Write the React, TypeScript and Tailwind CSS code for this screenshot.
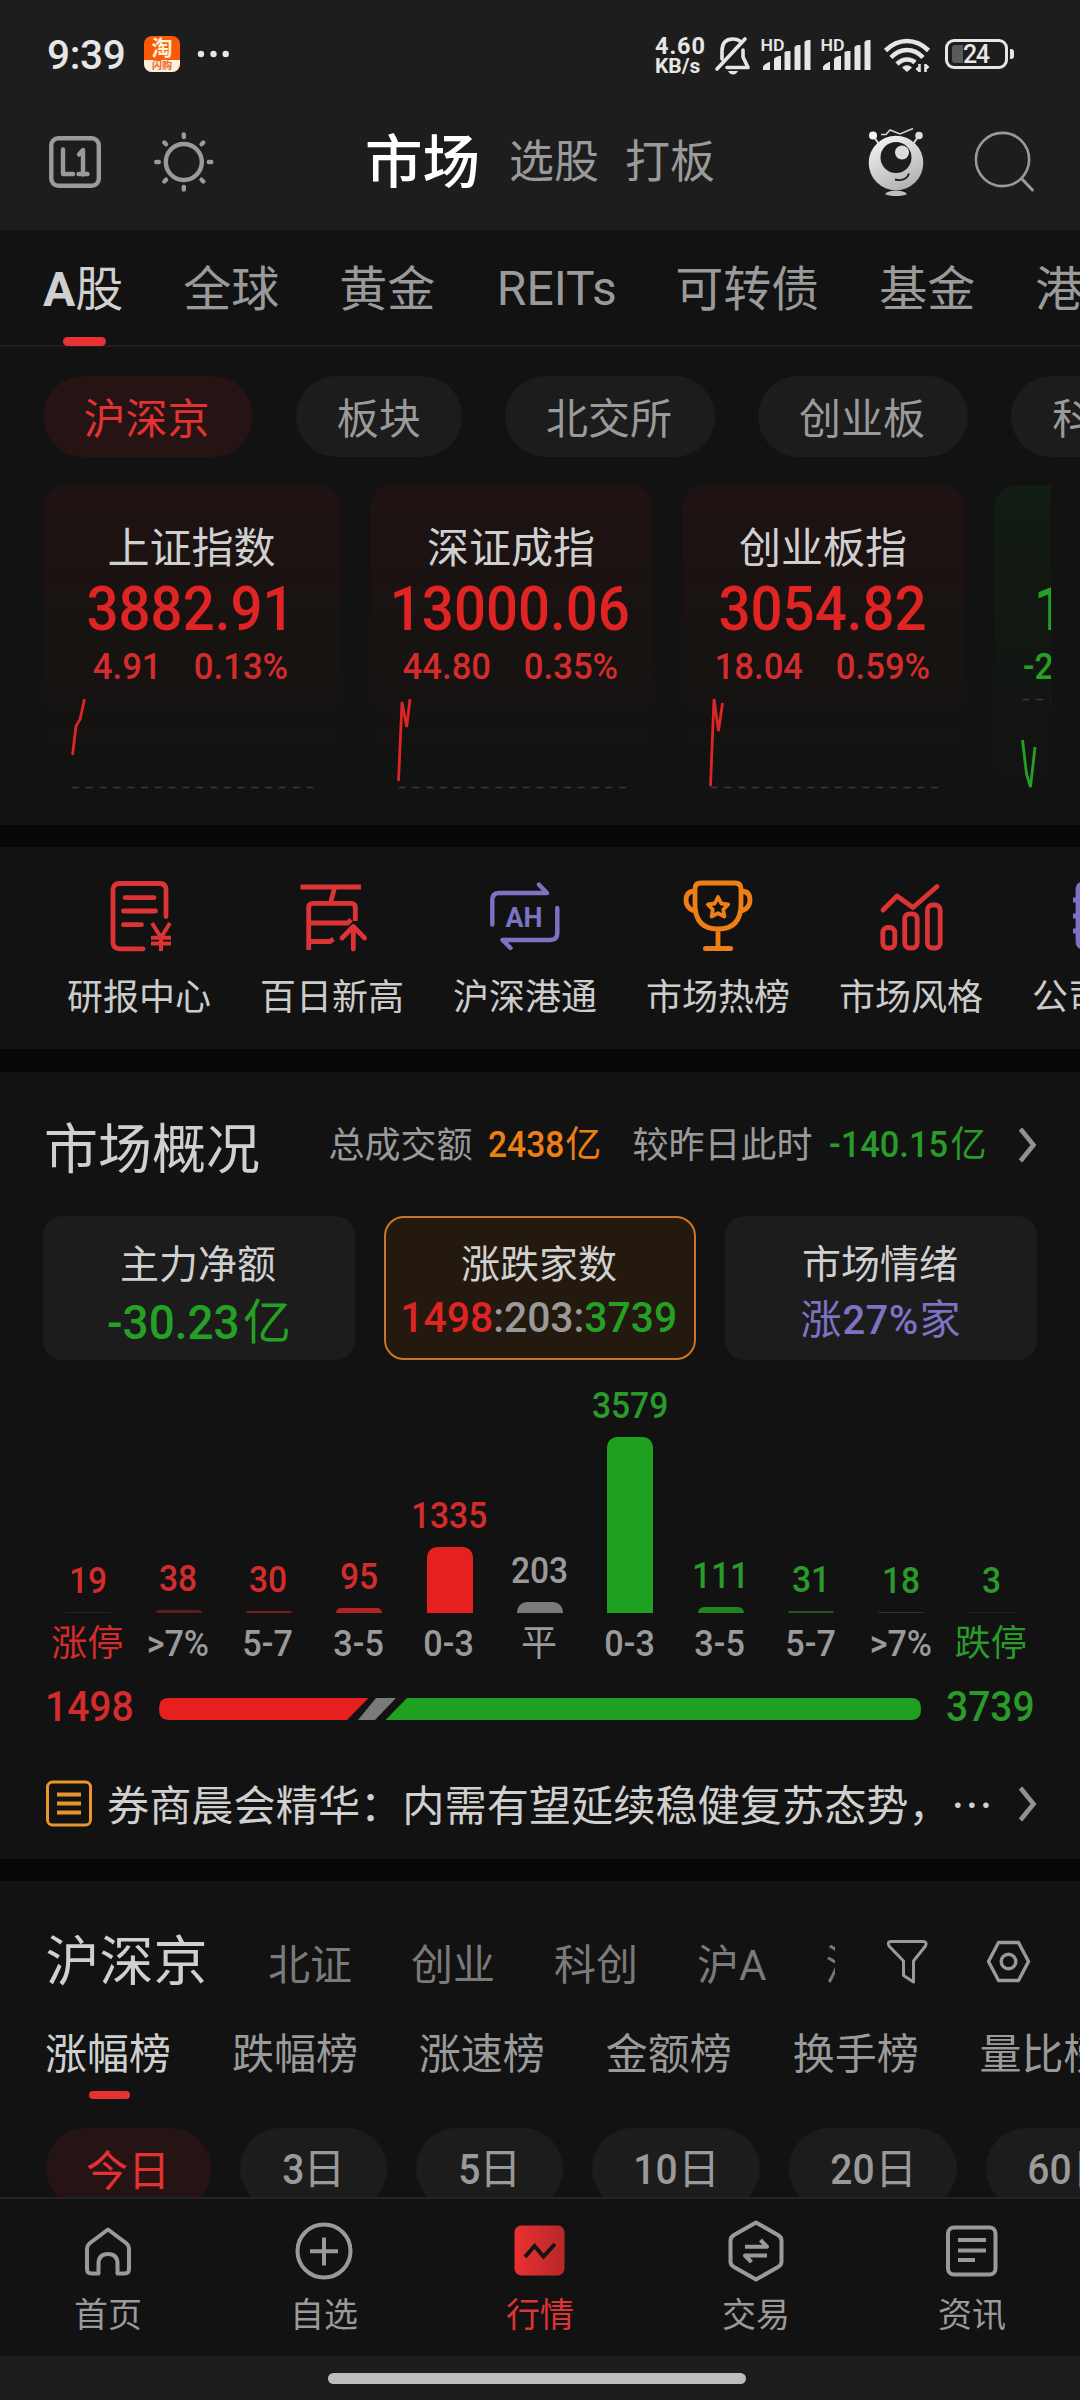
import React from "react";

const FONT = "font-['Roboto','Noto_Sans_CJK_SC',sans-serif]";
const NUM = "font-medium inline-block scale-x-[0.907]";
const NUM_WIDE = "font-medium inline-block scale-x-[0.925]";

/* ---------- status bar ---------- */

function Signal() {
  return (
    <svg className="h-[36px] w-[52px]" viewBox="760 36 52 36" fill="#e6e6e6">
      <text x="760.5" y="50.500" fontSize="17" fontWeight="600" textLength="24" lengthAdjust="spacingAndGlyphs">HD</text>
      <path d="M763 70v-3q0-2 6-5h1v8zM774 70V59q1-2 5-3h2v14zM784.500 70V52q1-1 4-1h2v19zM794.500 70V47q1-2 4-2h2v25zM804.500 70V42q1-2 4-2h2v30z" />
    </svg>
  );
}

function StatusBar() {
  return (
    <div className="flex h-[96px] shrink-0 items-start pt-[36px] text-[#e6e6e6]">
      <div className="ml-[47px] flex h-[38px] w-[80px] items-center text-[40.500px] font-medium leading-none tracking-[-0.300px]">9:39</div>
      <div className="ml-[17px] flex h-[36px] w-[36px] flex-col items-center rounded-[8px] bg-[#fb5a08]">
        <span className="h-[24px] text-[21px] font-bold leading-[25px] text-[#fff3dc]">淘</span>
        <span className="flex h-[12px] w-full items-center justify-center rounded-b-[8px] bg-[#fdeedd] text-[10px] font-bold leading-[12px] text-[#e8651c]">闪购</span>
      </div>
      <svg className="ml-[15px] h-[36px] w-[38px]" viewBox="195 36 38 36" fill="#e6e6e6">
        <circle cx="201" cy="54" r="3.200" /><circle cx="213.500" cy="54" r="3.200" /><circle cx="225.700" cy="54" r="3.200" />
      </svg>
      <div className="ml-[422px] flex w-[51px] flex-col items-start pt-[1px] font-bold leading-[19px]">
        <span className="text-[23.500px] tracking-[0.900px]">4.60</span>
        <span className="text-[21px] leading-[20px]">KB/s</span>
      </div>
      <svg className="ml-[7px] h-[40px] w-[38px]" viewBox="713 35 38 40" fill="none" stroke="#e6e6e6" strokeWidth="3.600" strokeLinecap="round">
        <path d="M717 68L745 38" />
        <path d="M722 58V50q0-12 11-12q4 0 7 2" />
        <path d="M743 49v7l5 10.500H727" strokeLinejoin="round" />
        <path d="M728 70h10q-2 3.500-5 3.500t-5-3.500z" fill="#e6e6e6" stroke="none" />
      </svg>
      <div className="ml-[9px]"><Signal /></div>
      <div className="ml-[8px]"><Signal /></div>
      <svg className="ml-[9px] h-[38px] w-[52px]" viewBox="881 36 52 38" fill="none" stroke="#e6e6e6" strokeWidth="4.600">
        <path d="M885.500 50.500q9.500-9.500 21.500-9.500t21.500 9.500" />
        <path d="M891 57.500q7-7.500 16-7.500t16 7.500" />
        <path d="M897 64q4.500-4.500 10-4.500q5 0 8 3" />
        <path d="M902 67.500q5-4.500 10 0l-5 4.500z" fill="#e6e6e6" stroke="none" />
        <path d="M919.500 64v8m-3-4l3 3M925.500 72v-8m3 4l-3-3" strokeWidth="2.600" />
      </svg>
      <div className="ml-[12px] mt-[3px] flex h-[30px] w-[63px] items-center rounded-[9px] border-[3px] border-[#e6e6e6] pl-[4px]">
        <div className="h-[18px] w-[11px] rounded-l-[3px] bg-[#5a5a5a]" />
        <span className="text-[25px] font-medium leading-none tracking-[-1.500px]">24</span>
      </div>
      <div className="ml-[2px] mt-[13px] h-[10px] w-[4px] rounded-r-[3px] bg-[#e6e6e6]" />
    </div>
  );
}

/* ---------- title bar ---------- */

function Header() {
  return (
    <div className="flex h-[134px] shrink-0 items-start pt-[26px]">
      <svg className="ml-[45px] h-[80px] w-[60px] shrink-0" viewBox="45 122 60 80" fill="none" stroke="#9a9a9a" strokeWidth="4.400" strokeLinecap="round" strokeLinejoin="round">
        <rect x="51.300" y="138.300" width="47.500" height="47.500" rx="7" />
        <path d="M63 149.500v24.500h10M79 154.500l4-4.500v24.500M78.500 174h9" />
      </svg>
      <svg className="ml-[44px] h-[80px] w-[70px] shrink-0" viewBox="149 122 70 80" fill="none" stroke="#9a9a9a" strokeWidth="4.400" strokeLinecap="round">
        <circle cx="183.800" cy="162" r="18" />
        <path d="M183.800 134.500v2.500M183.800 187v2.500M156.300 162h2.500M208.800 162h2.500M164.300 142.500l1.800 1.800M201.500 179.700l1.800 1.800M203.300 142.500l-1.800 1.800M166.100 179.700l-1.800 1.800" />
      </svg>
      <div className="ml-[146px] flex h-[80px] items-center whitespace-nowrap pt-[1px] leading-none">
        <span className="w-[114px] pt-[2px] text-[57.500px] font-medium text-white">市场</span>
        <span className="ml-[30px] w-[90px] text-[45px] text-[#9a9a9a]">选股</span>
        <span className="ml-[26px] w-[90px] text-[45px] text-[#9a9a9a]">打板</span>
      </div>
      <svg className="ml-[148px] h-[80px] w-[66px] shrink-0" viewBox="863 122 66 80">
        <defs>
          <linearGradient id="bot" x1="0.200" y1="0" x2="0.700" y2="1">
            <stop offset="0" stopColor="#f4f4f4" />
            <stop offset="1" stopColor="#b0b0b0" />
          </linearGradient>
        </defs>
        <path d="M874 137l5 7M918 137l-5 7" stroke="#dcdcdc" strokeWidth="2" />
        <circle cx="873" cy="135.500" r="4" fill="#f4f4f4" />
        <circle cx="919" cy="135.500" r="3.800" fill="#dcdcdc" />
        <path d="M881 134.500h5l4-4.500l10 4l13-5.500" fill="none" stroke="#d5d5d5" strokeWidth="1.500" />
        <circle cx="896" cy="163" r="27.300" fill="url(#bot)" />
        <circle cx="896" cy="157.500" r="15.500" fill="#1d1d1d" />
        <circle cx="902" cy="152.500" r="7" fill="#dcdcdc" />
        <path d="M895 179.500q11 2.500 14-6" fill="none" stroke="#1d1d1d" strokeWidth="1.800" />
        <path d="M885 194q3-3.500 11-3.500t11 3.500q-4 2-11 2t-11-2z" fill="#c0c0c0" />
      </svg>
      <svg className="ml-[41px] h-[80px] w-[70px] shrink-0" viewBox="970 122 70 80" fill="none" stroke="#9a9a9a" strokeWidth="2.600" strokeLinecap="round">
        <circle cx="1002.500" cy="159.500" r="26.600" />
        <path d="M1021.500 178.500l11 11.500" strokeWidth="3" />
      </svg>
    </div>
  );
}

function MarketTabs() {
  return (
    <div className="h-[117px] shrink-0 border-b-2 border-[#1e1e1e] pl-[43px]">
      <div className="flex h-[107px] items-center gap-[60px] whitespace-nowrap pt-[13px] text-[48px] leading-none text-[#9a9a9a]">
        <span className="shrink-0 text-[#d0d0d0]"><span className="font-bold">A</span>股</span>
        <span className="shrink-0">全球</span>
        <span className="shrink-0">黄金</span>
        <span className="w-[120px] shrink-0 pb-[3px] pl-[1.500px]">REITs</span>
        <span className="shrink-0">可转债</span>
        <span className="shrink-0">基金</span>
        <span className="shrink-0">港股</span>
      </div>
      <div className="ml-[20px] h-[9px] w-[43px] rounded-full bg-[#e63232]" />
    </div>
  );
}

function BoardPills() {
  const items = ["沪深京", "板块", "北交所", "创业板", "科创板"];
  return (
    <div className="mt-[29px] flex h-[81px] shrink-0 gap-[43.200px] pl-[42.500px]">
      {items.map((t, i) => (
        <div
          key={t}
          className={
            "flex h-[81px] shrink-0 items-center whitespace-nowrap rounded-full px-[41px] pt-[7px] text-[42px] leading-none " +
            (i === 0 ? "w-[210px] bg-[#261414] text-[#e23232]" : i === 1 ? "w-[166px] bg-[#1c1c1c] text-[#9a9a9a]" : "w-[210px] bg-[#1c1c1c] text-[#9a9a9a]")
          }
        >
          {t}
        </div>
      ))}
    </div>
  );
}

/* ---------- index cards ---------- */

type IndexItem = {
  name: string; value: string; diff: string; pct: string;
  w: string; vb: string; line: string; dash: string;
};

const INDEXES: IndexItem[] = [
  { name: "上证指数", value: "3882.91", diff: "4.91", pct: "0.13%", w: "w-[298px]", vb: "0 0 298 100", line: "M29.500 65L33 36L37 29.500L41.500 9", dash: "M29 97.500H270" },
  { name: "深证成指", value: "13000.06", diff: "44.80", pct: "0.35%", w: "w-[283px]", vb: "0 0 283 100", line: "M28.500 91L32 12L36.700 37L40 9", dash: "M28.500 97.500H256" },
  { name: "创业板指", value: "3054.82", diff: "18.04", pct: "0.59%", w: "w-[283px]", vb: "0 0 283 100", line: "M28.500 96L32 9L36.500 41L40.500 13", dash: "M28.500 97.500H256" },
];

function IndexCards() {
  return (
    <div className="ml-[43px] mt-[28px] flex h-[340px] w-[1008px] shrink-0 gap-[29px] overflow-hidden">
      {INDEXES.map((it) => (
        <div key={it.name} className={"flex h-[308px] shrink-0 flex-col items-center rounded-[22px] bg-gradient-to-b from-[#1f1212] via-[#171311] to-[#121212] " + it.w}>
          <span className="mr-[1px] mt-[43px] text-[42px] leading-[42px] text-[#d0d0d0]">{it.name}</span>
          <span className={"mr-[3px] mt-[9px] text-[61px] leading-[61px] text-[#e02424] " + NUM_WIDE}>{it.value}</span>
          <div className="mt-[8px] flex w-full justify-center gap-[25px] pr-[2px] text-[37.500px] leading-[37px] text-[#d42c2c]">
            <span className={NUM_WIDE}>{it.diff}</span>
            <span className={NUM_WIDE}>{it.pct}</span>
          </div>
          <svg className="mt-[5px] h-[100px] w-full shrink-0" viewBox={it.vb} fill="none">
            <path d={it.dash} stroke="#383838" strokeWidth="1.500" strokeDasharray="7 6.800" />
            <path d={it.line} stroke="#dc2626" strokeWidth="2.800" />
          </svg>
        </div>
      ))}
      <div className="flex h-[308px] w-[283px] shrink-0 flex-col items-start rounded-[22px] bg-gradient-to-b from-[#111c12] via-[#121712] to-[#121212]">
        <span className={"ml-[39.500px] mt-[94px] origin-left text-[61px] leading-[61px] text-[#24a124] " + NUM}>1</span>
        <span className={"ml-[29px] mt-[8px] origin-left text-[37px] leading-[37px] text-[#24a124] " + NUM}>-2</span>
        <svg className="mt-[5px] h-[100px] w-full shrink-0" viewBox="0 0 283 100" fill="none">
          <path d="M28.500 9.500H256" stroke="#383838" strokeWidth="1.500" strokeDasharray="7 6.800" />
          <path d="M28.500 50L32.500 84L36.500 97L41 57" stroke="#24a124" strokeWidth="2.800" />
        </svg>
      </div>
    </div>
  );
}

/* ---------- shortcuts ---------- */

function Shortcut({ label, color, children }: { label: string; color: string; children: React.ReactNode }) {
  return (
    <div className="flex w-[193px] shrink-0 flex-col items-center">
      <svg className="h-[80px] w-[80px]" viewBox="0 0 80 80" fill="none" stroke={color} strokeWidth="4.800" strokeLinejoin="round">
        {children}
      </svg>
      <span className="mt-[24px] w-[144px] whitespace-nowrap text-[36px] leading-[36px] text-[#cccccc]">{label}</span>
    </div>
  );
}

function Shortcuts() {
  return (
    <div className="flex h-[202px] shrink-0 bg-[#121212] pl-[42.500px] pt-[29px]">
      <Shortcut label="研报中心" color="#dc3434">
        <path d="M44 72.800H20.500q-6.500 0-6.500-6.500V14q0-6.500 6.500-6.500h40q6.500 0 6.500 6.500v26.500M26 21.700h29M24.500 35h32M24.500 48.700h18" strokeLinecap="round" />
        <path d="M53 47l9 14.500L71 47M62 61v14M52 61.700h20M52 67.500h20" strokeWidth="4" />
      </Shortcut>
      <Shortcut label="百日新高" color="#dc3434">
        <path d="M8.500 11h60.500M42.500 12l-4 15M16.700 74V31.500q0-4.200 4.200-4.200h38.200q4.200 0 4.200 4.200V45M17 47h39l3-3.500M17 65.500h21l3.500-2.500" />
        <path d="M61.300 73V51M50 62l11.300-11.500l11.300 11.500" strokeLinecap="round" />
      </Shortcut>
      <Shortcut label="沪深港通" color="#7d73c4">
        <path d="M7.300 48.500V24q0-7 7-7H62L54 8.700M72.300 32v25q0 7-7 7H17.500l8 8" strokeWidth="4.400" strokeLinecap="round" />
        <text x="20.500" y="51" fill="#7d73c4" stroke="none" fontSize="28" fontWeight="700" textLength="37" lengthAdjust="spacingAndGlyphs">AH</text>
      </Shortcut>
      <Shortcut label="市场热榜" color="#ee7f14">
        <path d="M17 13q0-6 6-6h34q6 0 6 6v15q0 25-23 25T17 28zM17 15q-9 0-9 9t11 12M63 15q9 0 9 9t-11 12M40 53v18" />
        <path d="M27.500 72.500h25" strokeWidth="5" strokeLinecap="round" />
        <path d="M40 21l3.200 6.500l7 1l-5 5l1.200 7L40 37.200l-6.400 3.300l1.200-7l-5-5l7-1z" strokeWidth="3.800" />
      </Shortcut>
      <Shortcut label="市场风格" color="#dc3434">
        <path d="M12 34L26 20L42 31.500L66 10.500" strokeLinecap="round" />
        <rect x="11.800" y="51.500" width="12" height="20.500" rx="5" />
        <rect x="33.700" y="37.800" width="12.500" height="34.200" rx="5" />
        <rect x="56.400" y="29" width="12.800" height="43" rx="5" />
      </Shortcut>
      <Shortcut label="公司日历" color="#7d73c4">
        <path d="M68 8H20q-6 0-6 6v51q0 6 6 6h48M9 24h10M9 40h10M9 55h10" />
      </Shortcut>
    </div>
  );
}

/* ---------- overview ---------- */

function Chevron() {
  return (
    <svg className="h-[38px] w-[20px] shrink-0" viewBox="0 0 20 38" fill="none" stroke="#929292" strokeWidth="4.600">
      <path d="M2.500 3L15.500 19L2.500 35" />
    </svg>
  );
}

const BARS = [
  { v: "19", l: "涨停", h: 1.4, c: "bg-[#3a1b1b]", t: "text-[#d42c2c]", lt: "text-[#d42c2c]" },
  { v: "38", l: ">7%", h: 2.6, c: "bg-[#5e1c1c]", t: "text-[#d42c2c]", lt: "text-[#9a9a9a]" },
  { v: "30", l: "5-7", h: 2, c: "bg-[#7a1e1e]", t: "text-[#d42c2c]", lt: "text-[#9a9a9a]" },
  { v: "95", l: "3-5", h: 5, c: "bg-[#b62222]", t: "text-[#d42c2c]", lt: "text-[#9a9a9a]" },
  { v: "1335", l: "0-3", h: 66, c: "bg-[#e61f1f]", t: "text-[#d42c2c]", lt: "text-[#9a9a9a]" },
  { v: "203", l: "平", h: 11, c: "bg-[#7a7a7a]", t: "text-[#9a9a9a]", lt: "text-[#9a9a9a]" },
  { v: "3579", l: "0-3", h: 176, c: "bg-[#20a020]", t: "text-[#2a9a2a]", lt: "text-[#9a9a9a]" },
  { v: "111", l: "3-5", h: 6, c: "bg-[#208520]", t: "text-[#2a9a2a]", lt: "text-[#9a9a9a]" },
  { v: "31", l: "5-7", h: 2, c: "bg-[#1e5c1e]", t: "text-[#2a9a2a]", lt: "text-[#9a9a9a]" },
  { v: "18", l: ">7%", h: 1.4, c: "bg-[#1a401a]", t: "text-[#2a9a2a]", lt: "text-[#9a9a9a]" },
  { v: "3", l: "跌停", h: 0.8, c: "bg-[#1a261a]", t: "text-[#2a9a2a]", lt: "text-[#2a9a2a]" },
];

function Overview() {
  const card = "flex h-[144px] w-[312px] shrink-0 flex-col items-center rounded-[20px] whitespace-nowrap";
  return (
    <div className="flex h-[787px] shrink-0 flex-col bg-[#121212]">
      <div className="flex h-[144px] shrink-0 items-start whitespace-nowrap pl-[44px] leading-none">
        <span className="mt-[52px] w-[216px] text-[54px] leading-[54px] text-[#d0d0d0]">市场概况</span>
        <div className="mt-[54px] flex h-[38px] items-center text-[36px] text-[#9a9a9a]">
          <span className="ml-[68.500px] w-[144px] pt-[1px]">总成交额</span>
          <span className="ml-[15.500px] w-[114px] pb-[1px] text-[#ee7f14]"><span className={"mr-[-7px] origin-left text-[37px] " + NUM}>2438</span>亿</span>
          <span className="ml-[30.500px] w-[180px] pt-[1px]">较昨日此时</span>
          <span className="ml-[16px] w-[161px] pb-[1px] text-[#2a9a2a]"><span className="mr-[-6px] inline-block origin-left scale-x-[0.93] text-[37px] font-medium">-140.15</span>亿</span>
          <span className="ml-[28.500px]"><Chevron /></span>
        </div>
      </div>

      <div className="flex gap-[29px] pl-[43px]">
        <div className={card + " bg-[#1c1c1c]"}>
          <span className="mr-[2px] mt-[30px] text-[39px] leading-[39px] text-[#d0d0d0]">主力净额</span>
          <span className="mt-[13px] text-[48px] leading-[50px] text-[#24a124]"><span className="mr-[-3px] inline-block origin-left scale-x-[0.955] text-[48px] font-medium">-30.23</span>亿</span>
        </div>
        <div className={card + " border-2 border-[#c9752a] bg-[#24190f]"}>
          <span className="mr-[2px] mt-[28px] text-[39px] leading-[39px] text-[#d0d0d0]">涨跌家数</span>
          <span className="mr-[2px] mt-[8px] inline-block scale-x-[0.95] text-[43px] font-medium leading-[48px] text-[#9a9a9a]">
            <span className="text-[#e02424]">1498</span>:203:<span className="text-[#24a124]">3739</span>
          </span>
        </div>
        <div className={card + " bg-[#1c1c1c]"}>
          <span className="mr-[2px] mt-[30px] text-[39px] leading-[39px] text-[#d0d0d0]">市场情绪</span>
          <span className="mr-[1px] mt-[11px] text-[41px] leading-[48px] text-[#7d73c4]">涨<span className="mx-[1px] text-[40px] font-medium tracking-[0.300px]">27%</span>家</span>
        </div>
      </div>

      <div className="mt-[20px] grid h-[233px] shrink-0 grid-cols-11 pl-[43px] pr-[43px]">
        {BARS.map((b, i) => (
          <div key={i} className="flex h-[233px] flex-col items-center justify-end">
            <span className={"mb-[13px] mr-[1px] text-[37px] leading-[37px] " + NUM + " " + b.t}>{b.v}</span>
            <div className={"w-[46px] shrink-0 rounded-t-[10px] " + b.c} style={{ height: b.h }} />
          </div>
        ))}
      </div>
      <div className="mt-[13px] grid h-[37px] shrink-0 grid-cols-11 whitespace-nowrap pl-[42px] pr-[44px] text-[36px] leading-[37px]">
        {BARS.map((b, i) => (
          <span key={i} className={"flex justify-center " + b.lt}>
            <span className={/[0-9]/.test(b.l) ? "inline-block scale-x-[0.95] font-medium" : ""}>{b.l}</span>
          </span>
        ))}
      </div>

      <div className="mt-[24px] flex h-[43px] shrink-0 items-center text-[43px] leading-[43px]">
        <span className={"ml-[45px] w-[88px] origin-left pb-[4px] text-[#d42c2c] " + NUM}>1498</span>
        <svg className="ml-[26px] h-[22px] w-[762px] shrink-0" viewBox="0 0 762 22">
          <path d="M9 0H209.500L188 22H9Q0 22 0 11T9 0z" fill="#e61f1f" />
          <path d="M217 0H237L216 22H199z" fill="#7a7a7a" />
          <path d="M248 0H753Q762 0 762 11T753 22H226.500z" fill="#20a020" />
        </svg>
        <span className={"ml-[25px] origin-left pb-[4px] text-[#2a9a2a] " + NUM}>3739</span>
      </div>

      <div className="mt-[53px] flex h-[44px] shrink-0 items-center whitespace-nowrap text-[42.200px] leading-[44px] text-[#d0d0d0]">
        <svg className="ml-[45px] mt-[-3px] h-[50px] w-[48px] shrink-0" viewBox="0 0 48 50" fill="none" stroke="#e8962c" strokeWidth="3">
          <rect x="2.500" y="3" width="43" height="43" rx="5" />
          <path d="M12 15.500h24M12 24.500h24M12 33.500h24" strokeWidth="3.800" />
        </svg>
        <span className="ml-[14px] w-[887px]">券商晨会精华：内需有望延续稳健复苏态势，<span className="font-['Noto_Sans_CJK_SC',sans-serif]">⋯</span></span>
        <span className="ml-[24px] mt-[-3px]"><Chevron /></span>
      </div>
    </div>
  );
}

/* ---------- ranking ---------- */

function Ranking() {
  const ranks = ["涨幅榜", "跌幅榜", "涨速榜", "金额榜", "换手榜", "量比榜"];
  const days: [string, string, string][] = [
    ["", "今日", "w-[165px]"], ["3", "日", "w-[147px]"], ["5", "日", "w-[147px]"],
    ["10", "日", "w-[168px]"], ["20", "日", "w-[168px]"], ["60", "日", "w-[168px]"],
  ];
  return (
    <div className="flex h-[316px] shrink-0 flex-col overflow-hidden bg-[#121212]">
      <div className="mt-[55px] flex h-[54px] shrink-0 items-center whitespace-nowrap">
        <span className="ml-[45.500px] w-[162px] text-[54px] leading-[52px] text-[#d0d0d0]">沪深京</span>
        <div className="ml-[60.500px] flex w-[567px] shrink-0 gap-[59px] overflow-hidden pt-[5px] text-[42px] leading-[46px] text-[#7a7a7a]">
          <span className="shrink-0">北证</span>
          <span className="shrink-0">创业</span>
          <span className="shrink-0">科创</span>
          <span className="shrink-0">沪A</span>
          <span className="shrink-0">深A</span>
        </div>
        <svg className="ml-[49px] h-[54px] w-[48px] shrink-0" viewBox="884 1936 48 54" fill="none" stroke="#9a9a9a" strokeWidth="3" strokeLinejoin="round">
          <path d="M891 1941.500h32q4.500 0 2.500 4.500l-12 15v21l-10-6.500v-14.500l-14.500-15q-2-4.500 2-4.500z" />
        </svg>
        <svg className="ml-[50px] h-[54px] w-[52px] shrink-0" viewBox="982 1936 52 54" fill="none" stroke="#9a9a9a" strokeWidth="3.400" strokeLinejoin="round">
          <path d="M998.500 1942.500h20l10 19l-10 19h-20l-10-19z" />
          <circle cx="1008.500" cy="1961.500" r="7.300" />
        </svg>
      </div>
      <div className="mt-[40px] flex h-[46px] shrink-0 items-center gap-[60.900px] whitespace-nowrap pl-[45px] pt-[3px] text-[42px] leading-[42px] text-[#9a9a9a]">
        {ranks.map((r, i) => (
          <span key={r} className={"shrink-0 " + (i === 0 ? "text-[#d0d0d0]" : "")}>{r}</span>
        ))}
      </div>
      <div className="ml-[88.500px] mt-[14.500px] h-[8px] w-[41px] shrink-0 rounded-full bg-[#e63232]" />
      <div className="mt-[29.500px] flex shrink-0 gap-[29px] pl-[45.500px]">
        {days.map(([n, t, w], i) => (
          <div key={i} className={"flex h-[81px] shrink-0 items-center justify-center whitespace-nowrap rounded-full text-[42px] leading-none " + w + (i === 0 ? " bg-[#261414] pt-[6px] text-[#e23232]" : " bg-[#1c1c1c] pt-[2px] text-[#9a9a9a]")}>
            {n && <span className={"mr-[-2px] text-[43px] " + NUM}>{n}</span>}
            <span>{t}</span>
          </div>
        ))}
      </div>
    </div>
  );
}

/* ---------- bottom navigation ---------- */

function NavItem({ label, active, children }: { label: string; active?: boolean; children: React.ReactNode }) {
  return (
    <div className="flex flex-1 flex-col items-center pt-[18px]">
      <svg className="h-[70px] w-[70px]" viewBox="0 0 70 70" fill="none" stroke="#9a9a9a" strokeWidth="4" strokeLinejoin="round">{children}</svg>
      <span className={"mt-[11px] text-[34px] leading-[34px] " + (active ? "text-[#dc3434]" : "text-[#9a9a9a]")}>{label}</span>
    </div>
  );
}

function BottomNav() {
  return (
    <div className="flex h-[159px] shrink-0 border-t-2 border-[#232323] bg-[#121212]">
      <NavItem label="首页">
        <path d="M35 12.500L53 26q3 2.500 3 6v20q0 4.500-4.500 4.500h-7V47q0-10-9.500-10t-9.500 10v9.500h-7Q14 56.500 14 52V32q0-3.500 3-6z" />
      </NavItem>
      <NavItem label="自选">
        <circle cx="35" cy="34" r="26.500" />
        <path d="M35 20.500v28M21 34.300h28" />
      </NavItem>
      <NavItem label="行情" active>
        <defs>
          <linearGradient id="nav" x1="0" x2="1">
            <stop offset="0" stopColor="#ea3030" />
            <stop offset="1" stopColor="#b82828" />
          </linearGradient>
        </defs>
        <rect x="9.500" y="8.500" width="50" height="50" rx="7" fill="url(#nav)" stroke="none" />
        <path d="M20 40l9.500-11l9 10.500L50 27" stroke="#141414" strokeLinejoin="miter" />
      </NavItem>
      <NavItem label="交易">
        <path d="M35 5.500L57 18q3.500 2 3.500 5.500v21q0 3.500-3.500 5.500L35 62.500L13 50q-3.500-2-3.500-5.500v-21q0-3.500 3.500-5.500z" />
        <path d="M24 29.700h22L39.500 23M46 38.500H24l6.500 6.700" />
      </NavItem>
      <NavItem label="资讯">
        <rect x="11" y="10.500" width="47.500" height="47" rx="6" />
        <path d="M21 23h28M21 33.500h28M21 43h17" />
      </NavItem>
    </div>
  );
}

export default function App() {
  return (
    <div className={"flex h-[2400px] w-[1080px] flex-col overflow-hidden bg-[#121212] " + FONT}>
      <div className="flex h-[230px] shrink-0 flex-col bg-[#1d1d1d]">
        <StatusBar />
        <Header />
      </div>
      <MarketTabs />
      <BoardPills />
      <IndexCards />
      <div className="h-[22px] shrink-0 bg-[#070707]" />
      <Shortcuts />
      <div className="h-[23px] shrink-0 bg-[#070707]" />
      <Overview />
      <div className="h-[22px] shrink-0 bg-[#070707]" />
      <Ranking />
      <BottomNav />
      <div className="flex h-[44px] shrink-0 justify-center bg-[#1d1d1d] pt-[17px]">
        <div className="mr-[6px] h-[11px] w-[418px] rounded-full bg-[#bdbdbd]" />
      </div>
    </div>
  );
}
